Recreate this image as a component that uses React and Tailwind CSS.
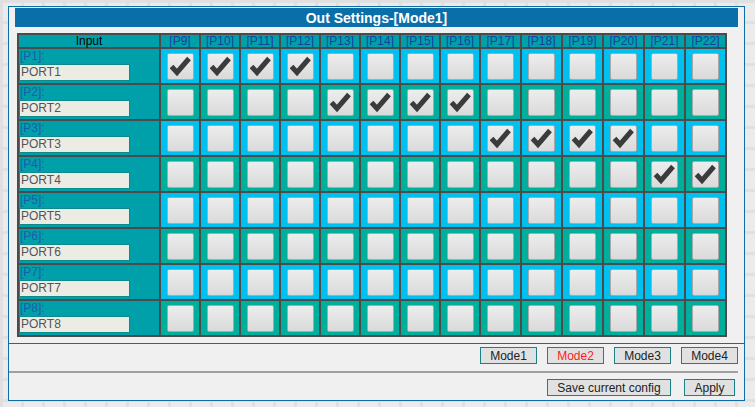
import React from 'react';

const ports = ['P9','P10','P11','P12','P13','P14','P15','P16','P17','P18','P19','P20','P21','P22'];
const checkedMap = { 0: [0,1,2,3], 1: [4,5,6,7], 2: [8,9,10,11], 3: [12,13] };

function Box({ checked }) {
  return (
    <div className="w-[27px] h-[27px] rounded-[2px] border border-[#a9a9a9] bg-gradient-to-b from-[#ededed] to-[#dadada] flex items-center justify-center">
      {checked && (
        <svg width="25" height="25" viewBox="0 0 25 25">
          <path d="M3.5 12.5 L9 18.5 L21 4.5" fill="none" stroke="#3b3b3b" strokeWidth="5" strokeLinejoin="miter" />
        </svg>
      )}
    </div>
  );
}

function ModeBtn({ label, red, w }) {
  return (
    <div className={`h-[17px] ${w} border border-[#168484] bg-[#e1e1e1] text-[12px] leading-none flex items-center justify-center ${red ? 'text-[#ff1a1a]' : 'text-[#222]'}`}>
      {label}
    </div>
  );
}

export default function App() {
  const rows = [0,1,2,3,4,5,6,7];
  return (
    <div className="w-[755px] h-[407px] overflow-hidden pt-[6px] pl-[8px] font-['Liberation_Sans',Arial,sans-serif] bg-[#ebebeb] bg-[linear-gradient(90deg,#e0e0e0_3px,transparent_3px),linear-gradient(#e0e0e0_3px,transparent_3px)] bg-[size:21px_21px]">
      <div className="w-[737px] h-[395px] border border-[#0f6ca6] bg-[#f0f0f0] flex flex-col">
        <div className="h-[337px] shrink-0 border-b border-[#0f6ca6] pt-[1px]">
          <div className="ml-[6px] w-[723px] h-[19px] bg-[#0a6ea9] text-white font-bold text-[14px] leading-none flex items-center justify-center">
            Out Settings-[Mode1]
          </div>
          <div className="ml-[8px] mt-[6px] w-[710px] grid grid-cols-[140px_repeat(8,38px)_repeat(6,39px)] grid-rows-[12px_repeat(8,34px)] gap-[2px] p-[2px] bg-[#4b4b4b]">
            <div className="bg-[#00a0ab] text-[12px] leading-none text-black flex items-center justify-center">Input</div>
            {ports.map((p) => (
              <div key={p} className="bg-[#00a0ab] text-[12px] leading-none text-[#1c3f9e] flex items-center justify-center">[{p}]</div>
            ))}
            {rows.map((r) => (
              <React.Fragment key={r}>
                <div className="bg-[#00a0ab] flex flex-col">
                  <div className="h-[15px] text-[12px] leading-[15px] text-[#1f5ca6] pl-[1px]">[P{r + 1}]:</div>
                  <div className="w-[111px] h-[17px] bg-[#edece4] border border-[#0b8c8c] text-[12px] leading-[15px] text-[#555] pl-[1px]">PORT{r + 1}</div>
                </div>
                {ports.map((p, i) => (
                  <div key={p} className={`${r % 2 === 0 ? 'bg-[#00c0ef]' : 'bg-[#00af9b]'} flex items-center justify-center`}>
                    <Box checked={(checkedMap[r] || []).includes(i)} />
                  </div>
                ))}
              </React.Fragment>
            ))}
          </div>
        </div>
        <div className="mt-[3px] flex justify-end gap-[10px] pr-[6px]">
          <ModeBtn label="Mode1" w="w-[57px]" />
          <ModeBtn label="Mode2" w="w-[57px]" red />
          <ModeBtn label="Mode3" w="w-[57px]" />
          <ModeBtn label="Mode4" w="w-[57px]" />
        </div>
        <div className="mt-[7px] h-[2px] bg-[#a0a0a0] mr-[6px]"></div>
        <div className="mt-[6px] flex justify-end gap-[13px] pr-[9px]">
          <ModeBtn label="Save current config" w="w-[124px]" />
          <ModeBtn label="Apply" w="w-[51px]" />
        </div>
      </div>
    </div>
  );
}
